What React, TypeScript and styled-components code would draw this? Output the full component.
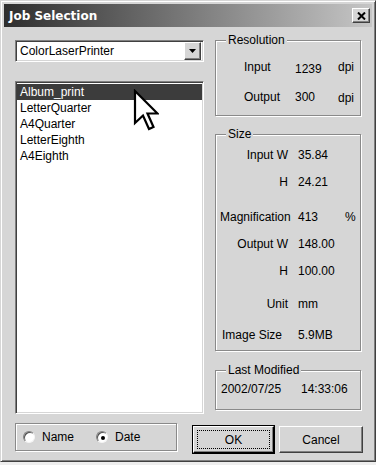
import styled, { createGlobalStyle } from "styled-components";

const GlobalStyle = createGlobalStyle`
  html, body {
    margin: 0;
    padding: 0;
    background: #eeeeee;
  }
  body {
    font-family: "Liberation Sans", Arial, sans-serif;
    font-size: 12px;
    color: #000;
  }
`;

const face = "#d6d6d6";

const Window = styled.div`
  width: 376px;
  height: 462px;
  box-sizing: border-box;
  display: flex;
  flex-direction: column;
  background: ${face};
  border: 1px solid;
  border-color: #d6d6d6 #404040 #404040 #d6d6d6;
  box-shadow: inset 1px 1px 0 #fff, inset -1px -1px 0 #808080;
  padding: 3px;
`;

const TitleBar = styled.div`
  height: 23px;
  display: flex;
  align-items: center;
  justify-content: space-between;
  padding: 0 2px 0 5px;
  background: linear-gradient(to right, #2e2e2e, #c6c6c6);
`;

const Title = styled.span`
  font-family: "DejaVu Sans", Tahoma, sans-serif;
  font-weight: bold;
  font-size: 12px;
  color: #fff;
`;

const RaisedButton = styled.button`
  box-sizing: border-box;
  background: ${face};
  border: 1px solid;
  border-color: #fff #404040 #404040 #fff;
  box-shadow: inset -1px -1px 0 #808080;
  padding: 0;
  font-family: "Liberation Sans", Arial, sans-serif;
  font-size: 12px;
  color: #000;
  display: flex;
  align-items: center;
  justify-content: center;
`;

const CloseButton = styled(RaisedButton)`
  width: 18px;
  height: 15px;
`;

const Body = styled.div`
  flex: 1;
  display: flex;
  flex-direction: column;
  padding: 6px 9px 0 11px;
`;

const Main = styled.div`
  height: 380px;
  display: grid;
  grid-template-columns: 189px 146px;
  column-gap: 11px;
`;

const LeftColumn = styled.div`
  display: flex;
  flex-direction: column;
  padding-top: 7px;
`;

const Sunken = styled.div`
  box-sizing: border-box;
  background: #fff;
  border: 1px solid;
  border-color: #808080 #fff #fff #808080;
  box-shadow: inset 1px 1px 0 #404040, inset -1px -1px 0 ${face};
  padding: 2px;
`;

const Combo = styled(Sunken)`
  height: 22px;
  display: flex;
  align-items: center;
  justify-content: space-between;
  padding: 2px 2px 2px 4px;
`;

const DropButton = styled(RaisedButton)`
  width: 17px;
  height: 18px;
`;

const ListBox = styled(Sunken)`
  position: relative;
  flex: 1;
  margin-top: 19px;
  margin-bottom: -1px;
  padding: 2px 1px;
`;

const Item = styled.div<{ selected?: boolean }>`
  height: 16px;
  line-height: 16px;
  padding-left: 3px;
  background: ${({ selected }) => (selected ? "#3c3c3c" : "transparent")};
  color: ${({ selected }) => (selected ? "#fff" : "#000")};
`;

const Pointer = styled.svg`
  position: absolute;
  left: 117px;
  top: 7px;
`;

const RightColumn = styled.div`
  display: flex;
  flex-direction: column;
`;

const Group = styled.fieldset<{ top?: number; bottom?: number }>`
  margin: ${({ top }) => top ?? 0}px 0 0 0;
  min-width: 0;
  border: 1px solid #8a8a8a;
  box-shadow: inset 1px 1px 0 #fff, 1px 1px 0 #fff;
  padding: 0 3px ${({ bottom }) => bottom ?? 3}px 4px;
`;

const Legend = styled.legend`
  margin-left: 6px;
  padding: 0 2px;
  line-height: 14px;
  background: ${face};
  position: relative;
`;

const ResGrid = styled.div`
  display: grid;
  grid-template-columns: 51px 43px auto;
  grid-auto-rows: 30px;
  padding: 5px 0 0 24px;
`;

const Cell = styled.div<{ align?: string; offset?: number; drop?: number }>`
  box-sizing: border-box;
  display: flex;
  align-items: center;
  justify-content: ${({ align }) => (align ? `safe ${align}` : "flex-start")};
  padding-right: ${({ offset }) => offset || 0}px;
  padding-top: ${({ drop }) => drop || 0}px;
  white-space: nowrap;
`;

const SizeRow = styled.div<{ top?: number }>`
  display: grid;
  grid-template-columns: 68px 37px auto;
  column-gap: 10px;
  height: 27px;
  margin-top: ${({ top }) => top || 0}px;
`;

const DateRow = styled.div`
  display: grid;
  grid-template-columns: 80px auto;
  height: 24px;
  padding-left: 1px;
  margin-bottom: 5px;
`;

const BottomRow = styled.div`
  display: flex;
  align-items: flex-start;
  margin-top: 10px;
`;

const RadioBox = styled.div`
  box-sizing: border-box;
  width: 162px;
  height: 28px;
  display: flex;
  align-items: center;
  gap: 22px;
  padding-left: 7px;
  border: 1px solid #8a8a8a;
  box-shadow: inset 1px 1px 0 #fff, 1px 1px 0 #fff;
`;

const RadioLabel = styled.label`
  display: flex;
  align-items: center;
  gap: 7px;
`;

const Radio = styled.span<{ checked?: boolean }>`
  box-sizing: border-box;
  width: 12px;
  height: 12px;
  border-radius: 50%;
  background: #fff;
  border: 1px solid;
  border-color: #808080 #f4f4f4 #f4f4f4 #808080;
  box-shadow: inset 1px 1px 0 #505050;
  display: flex;
  align-items: center;
  justify-content: center;
  &::after {
    content: "";
    width: 4px;
    height: 4px;
    border-radius: 50%;
    margin: 1px 0 0 1px;
    background: ${({ checked }) => (checked ? "#000" : "transparent")};
  }
`;

const Buttons = styled.div`
  display: flex;
  gap: 5px;
  margin: 3px 0 0 16px;
`;

const PushButton = styled(RaisedButton)<{ primary?: boolean }>`
  position: relative;
  width: ${({ primary }) => (primary ? 81 : 84)}px;
  height: 27px;
  outline: ${({ primary }) => (primary ? "1px solid #000" : "none")};
  outline-offset: 0;
  border-color: ${({ primary }) =>
    primary ? "#fff #000 #000 #fff" : "#fff #404040 #404040 #fff"};
`;

const FocusRing = styled.span`
  position: absolute;
  inset: 3px;
  border: 1px dotted #000;
`;

export default function App() {
  const items = ["Album_print", "LetterQuarter", "A4Quarter", "LetterEighth", "A4Eighth"];

  return (
    <>
      <GlobalStyle />
      <Window>
        <TitleBar>
          <Title>Job Selection</Title>
          <CloseButton>
            <svg width="9" height="8" viewBox="0 0 9 8">
              <path d="M1 0.5 L8 7.5 M8 0.5 L1 7.5" stroke="#000" strokeWidth="2" />
            </svg>
          </CloseButton>
        </TitleBar>

        <Body>
          <Main>
            <LeftColumn>
              <Combo>
                <span>ColorLaserPrinter</span>
                <DropButton>
                  <svg width="8" height="4" viewBox="0 0 8 4">
                    <path d="M0 0 H7 L3.5 4 Z" fill="#000" />
                  </svg>
                </DropButton>
              </Combo>
              <ListBox>
                {items.map((name, i) => (
                  <Item key={name} selected={i === 0}>
                    {name}
                  </Item>
                ))}
                <Pointer width="26" height="44" viewBox="-2 -2 26 44">
                  <path
                    d="M0 0 L0 32 L8 24.5 L14 38 L18.5 36 L12.5 22.5 L22.5 22.5 Z"
                    fill="#fff"
                    stroke="#000"
                    strokeWidth="2.2"
                    strokeLinejoin="miter"
                  />
                </Pointer>
              </ListBox>
            </LeftColumn>

            <RightColumn>
              <Group>
                <Legend>Resolution</Legend>
                <ResGrid>
                  <Cell>Input</Cell>
                  <Cell drop={4}>1239</Cell>
                  <Cell>dpi</Cell>
                  <Cell>Output</Cell>
                  <Cell>300</Cell>
                  <Cell drop={2}>dpi</Cell>
                </ResGrid>
              </Group>

              <Group top={11} bottom={2}>
                <Legend>Size</Legend>
                <SizeRow>
                  <Cell align="flex-end">Input W</Cell>
                  <Cell>35.84</Cell>
                </SizeRow>
                <SizeRow>
                  <Cell align="flex-end">H</Cell>
                  <Cell>24.21</Cell>
                </SizeRow>
                <SizeRow top={8}>
                  <Cell align="flex-end">Magnification</Cell>
                  <Cell>413</Cell>
                  <Cell>%</Cell>
                </SizeRow>
                <SizeRow>
                  <Cell align="flex-end">Output W</Cell>
                  <Cell>148.00</Cell>
                </SizeRow>
                <SizeRow>
                  <Cell align="flex-end">H</Cell>
                  <Cell>100.00</Cell>
                </SizeRow>
                <SizeRow top={6}>
                  <Cell align="flex-end">Unit</Cell>
                  <Cell>mm</Cell>
                </SizeRow>
                <SizeRow top={4}>
                  <Cell align="flex-end" offset={6}>Image Size</Cell>
                  <Cell>5.9MB</Cell>
                </SizeRow>
              </Group>

              <Group top={12}>
                <Legend>Last Modified</Legend>
                <DateRow>
                  <Cell>2002/07/25</Cell>
                  <Cell>14:33:06</Cell>
                </DateRow>
              </Group>
            </RightColumn>
          </Main>

          <BottomRow>
            <RadioBox>
              <RadioLabel>
                <Radio />
                Name
              </RadioLabel>
              <RadioLabel>
                <Radio checked />
                Date
              </RadioLabel>
            </RadioBox>
            <Buttons>
              <PushButton primary>
                <FocusRing />
                OK
              </PushButton>
              <PushButton>Cancel</PushButton>
            </Buttons>
          </BottomRow>
        </Body>
      </Window>
    </>
  );
}
